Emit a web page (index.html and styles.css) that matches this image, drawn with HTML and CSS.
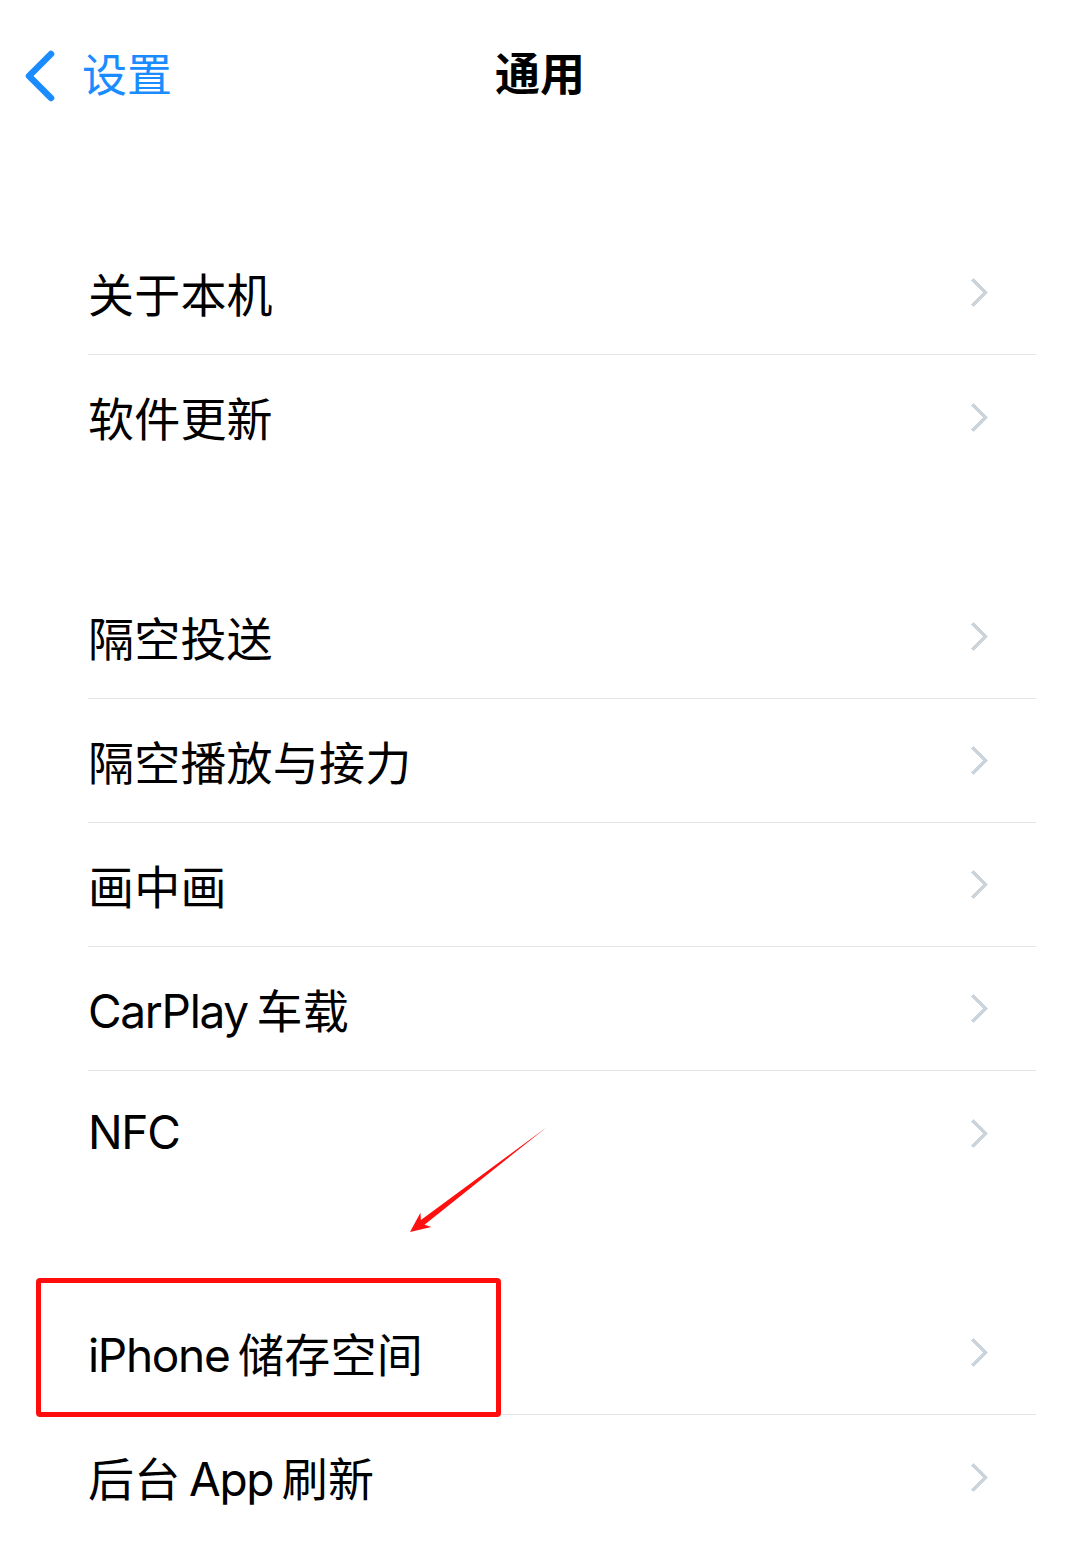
FILE: index.html
```html
<!DOCTYPE html>
<html lang="zh-CN">
<head>
  <meta charset="UTF-8">
  <title>通用</title>
  <link rel="stylesheet" href="styles.css">
</head>
<body>
  <div class="screen">
    <header class="nav">
      <a class="back" href="#">
        <svg class="back-icon" width="32" height="52" viewBox="0 0 32 52">
          <polyline points="27,4 5,26 27,48" fill="none" stroke="#1a8cff" stroke-width="6.5" stroke-linecap="round" stroke-linejoin="round"/>
        </svg>
        <span>设置</span>
      </a>
      <h1 class="title">通用</h1>
    </header>

    <ul class="group">
      <li class="row"><span>关于本机</span><i class="chev"></i></li>
      <li class="row"><span>软件更新</span><i class="chev"></i></li>
    </ul>

    <ul class="group">
      <li class="row"><span>隔空投送</span><i class="chev"></i></li>
      <li class="row"><span>隔空播放与接力</span><i class="chev"></i></li>
      <li class="row"><span>画中画</span><i class="chev"></i></li>
      <li class="row"><span><b class="en">CarPlay</b>&thinsp;车载</span><i class="chev"></i></li>
      <li class="row"><span><b class="en">NFC</b></span><i class="chev"></i></li>
    </ul>

    <ul class="group">
      <li class="row"><span><b class="en">iPhone</b>&thinsp;储存空间</span><i class="chev"></i></li>
      <li class="row"><span>后台&thinsp;<b class="en">App</b>&thinsp;刷新</span><i class="chev"></i></li>
    </ul>

    <!-- annotation -->
    <div class="mark"></div>
    <svg class="arrow" viewBox="0 0 1080 1557" width="1080" height="1557">
      <polygon points="547,1127 424.5,1224.7 431.4,1227 410,1232 420.4,1212.7 420.9,1219.9" fill="#ff1010"/>
    </svg>
  </div>
</body>
</html>
```

FILE: styles.css
```css
body {
  margin: 0;
  background: #fff;
  font-family: "Inter", "Noto Sans CJK SC", sans-serif;
  color: #000;
}

.screen {
  position: relative;
  width: 1080px;
  height: 1557px;
  overflow: hidden;
}

.nav {
  height: 152px;
  display: flex;
  align-items: center;
  justify-content: center;
  position: relative;
}

.back {
  position: absolute;
  left: 24px;
  top: 50px;
  display: flex;
  align-items: center;
  gap: 26px;
  color: #1a8cff;
  text-decoration: none;
  font-size: 45px;
  line-height: 52px;
}

.back-icon {
  display: block;
}

.title {
  margin: 0;
  font-size: 45px;
  font-weight: 700;
  line-height: 52px;
  margin-top: -2px;
}

.group {
  list-style: none;
  margin: 0 44px 96px 88px;
  padding: 0;
}

.group:first-of-type {
  margin-top: 79px;
}

.row {
  height: 123px;
  display: flex;
  align-items: center;
  justify-content: space-between;
  padding: 0 47px 0 0;
  border-bottom: 1px solid #e4e4e9;
  font-size: 46px;
  letter-spacing: 0.2px;
}

.row:last-child {
  border-bottom: none;
  height: 124px;
}

.row span {
  margin-top: -2px;
}

.en {
  font-weight: 400;
  letter-spacing: -1.3px;
}

.chev {
  width: 17px;
  height: 17px;
  border-top: 4px solid #cbd3db;
  border-right: 4px solid #cbd3db;
  border-radius: 2px;
  transform: rotate(45deg);
  margin-right: 5px;
}

.mark {
  position: absolute;
  left: 36px;
  top: 1278px;
  width: 455px;
  height: 129px;
  border: 5px solid #ff0d0d;
  border-radius: 4px;
}

.arrow {
  position: absolute;
  left: 0;
  top: 0;
  pointer-events: none;
}
```
